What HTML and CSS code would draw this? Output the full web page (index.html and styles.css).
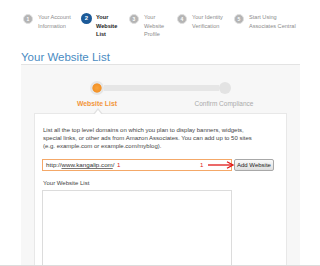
FILE: index.html
```html
<!DOCTYPE html>
<html lang="en">
<head>
  <meta charset="UTF-8" />
  <meta name="viewport" content="width=device-width, initial-scale=1" />
  <title>Your Website List</title>
  <link rel="stylesheet" href="styles.css">
</head>
<body>

<div class="page">
  <ol class="steps">
    <li class="step"><span class="num">1</span><span class="step-label">Your Account<br>Information</span></li>
    <li class="step current"><span class="num">2</span><span class="step-label">Your<br>Website<br>List</span></li>
    <li class="step"><span class="num">3</span><span class="step-label">Your<br>Website<br>Profile</span></li>
    <li class="step"><span class="num">4</span><span class="step-label">Your Identity<br>Verification</span></li>
    <li class="step"><span class="num">5</span><span class="step-label">Start Using<br>Associates Central</span></li>
  </ol>

  <h1 class="title">Your Website List</h1>

  <div class="panel">
    <div class="progress">
      <span class="dot active"></span>
      <span class="bar"></span>
      <span class="dot"></span>
    </div>
    <div class="progress-labels">
      <span class="active">Website List</span>
      <span>Confirm Compliance</span>
    </div>

    <div class="card">
      <p class="intro">List all the top level domains on which you plan to display banners, widgets,<br>special links, or other ads from Amazon Associates. You can add up to 50 sites<br>(e.g. example.com or example.com/myblog).</p>

      <div class="add-row">
        <div class="url-input">http://<u>www.kangalip.com</u>/</div>
        <button class="add-btn">Add Website</button>
        <!-- annotations drawn over the screenshot -->
        <span class="mark mark-one">1</span>
        <span class="mark mark-two">1</span>
        <svg class="arrow" width="26" height="8" viewBox="0 0 26 8">
          <path d="M0 4 H24" stroke="#e01818" stroke-width="1.3" fill="none"/>
          <path d="M19 0.8 L25 4 L19 7.2" stroke="#e01818" stroke-width="1.3" fill="none"/>
        </svg>
      </div>

      <label class="list-label">Your Website List</label>
      <div class="list-box"></div>
    </div>
  </div>
</div>

</body>
</html>
```

FILE: styles.css
```css
body {
  margin: 0;
  background: #fff;
  color: #333;
  font-family: "Liberation Sans", Arial, sans-serif;
}

.page {
  height: 265px;
  overflow: hidden;
  border-bottom: 1px solid #dcdcdc;
}

/* wizard steps */
.steps {
  list-style: none;
  margin: 0;
  padding: 13px 0 0 23px;
  height: 50px;
  box-sizing: border-box;
  display: grid;
  grid-template-columns: 58px 48px 48px 57px auto;
}

.step {
  display: flex;
  align-items: flex-start;
  gap: 5px;
}

.num {
  flex: none;
  width: 8px;
  height: 8px;
  margin-top: 1px;
  border-radius: 50%;
  border: 1px solid #dedede;
  background: #b4b4b4;
  color: #fff;
  font-size: 5px;
  font-weight: bold;
  line-height: 8px;
  text-align: center;
}

.step.current .num {
  width: 11px;
  height: 11px;
  margin-top: 0;
  border: none;
  background: #1c5a98;
  line-height: 11px;
  font-size: 6px;
}

.step.current .step-label {
  color: #222;
  font-weight: bold;
  margin-left: -1px;
}

.step-label {
  font-size: 5.6px;
  line-height: 8.5px;
  color: #8c8c8c;
  white-space: nowrap;
}

/* title */
.title {
  margin: 0 20px 0 21px;
  height: 14px;
  font-size: 11.5px;
  line-height: 14px;
  font-weight: normal;
  color: #4a8bc2;
  border-bottom: 1px solid #e3e3e3;
}

/* panel */
.panel {
  margin: 0 20px 0 21px;
  padding-top: 16px;
  background: #f7f7f7;
  height: 220px;
}

.progress {
  display: flex;
  align-items: center;
  margin-left: 69px;
  width: 141px;
  height: 14px;
}

.dot {
  flex: none;
  width: 12px;
  height: 12px;
  border-radius: 50%;
  background: #e3e3e3;
}

.dot.active {
  width: 14px;
  height: 14px;
  background: radial-gradient(circle, #f9a43c 0, #f39228 4.2px, #e6e6e6 5px);
}

.bar {
  flex: 1;
  height: 6px;
  background: #e6e6e6;
}

.progress-labels {
  display: flex;
  gap: 57px;
  margin: 4px 0 0 46px;
  font-size: 6.5px;
  line-height: 9px;
  color: #aaa;
}

.progress-labels span {
  width: 80px;
  text-align: center;
}

.progress-labels .active {
  width: 60px;
  color: #f2953a;
  font-weight: bold;
  font-size: 6.8px;
}

/* white card */
.card {
  position: relative;
  margin: 5px 13px 0;
  padding: 12px 8px 0;
  background: #fff;
  border: 1px solid #e8e8e8;
  border-bottom: none;
  height: 160px;
}

.card::before,
.card::after {
  content: "";
  position: absolute;
  left: 58px;
  top: -6px;
  border: 5px solid transparent;
  border-top: none;
  border-bottom: 6px solid #e2e2e2;
}

.card::after {
  left: 59px;
  top: -4px;
  border-width: 0 4px 5px;
  border-bottom-color: #fff;
}

.intro {
  margin: 0;
  font-size: 6px;
  line-height: 8px;
  color: #444;
  white-space: nowrap;
}

.add-row {
  position: relative;
  display: flex;
  gap: 2px;
  margin: 9px 0 0 -1px;
}

.url-input {
  box-sizing: border-box;
  width: 190px;
  height: 12px;
  padding-left: 3px;
  border: 1px solid #f4a868;
  background: #fff;
  font-size: 6.2px;
  line-height: 10px;
  color: #333;
  white-space: nowrap;
}

.url-input u {
  text-decoration-color: #777;
}

.mark {
  position: absolute;
  top: 1px;
  color: #e01818;
  font-size: 6px;
  line-height: 10px;
}

.mark-one {
  left: 75px;
}

.mark-two {
  left: 158px;
}

.arrow {
  position: absolute;
  left: 166px;
  top: 2px;
}

.add-btn {
  box-sizing: border-box;
  width: 40px;
  height: 12px;
  padding: 0;
  border: 1px solid #a8a8a8;
  border-radius: 2px;
  background: linear-gradient(#fafafa, #dedede);
  font-family: "Liberation Sans", Arial, sans-serif;
  font-size: 6px;
  color: #222;
}

.list-label {
  display: block;
  margin-top: 8px;
  font-size: 6px;
  line-height: 8px;
  color: #444;
}

.list-box {
  margin: 3px 0 0 -1px;
  width: 188px;
  height: 100px;
  border: 1px solid #dcdcdc;
  background: #fff;
}
```
